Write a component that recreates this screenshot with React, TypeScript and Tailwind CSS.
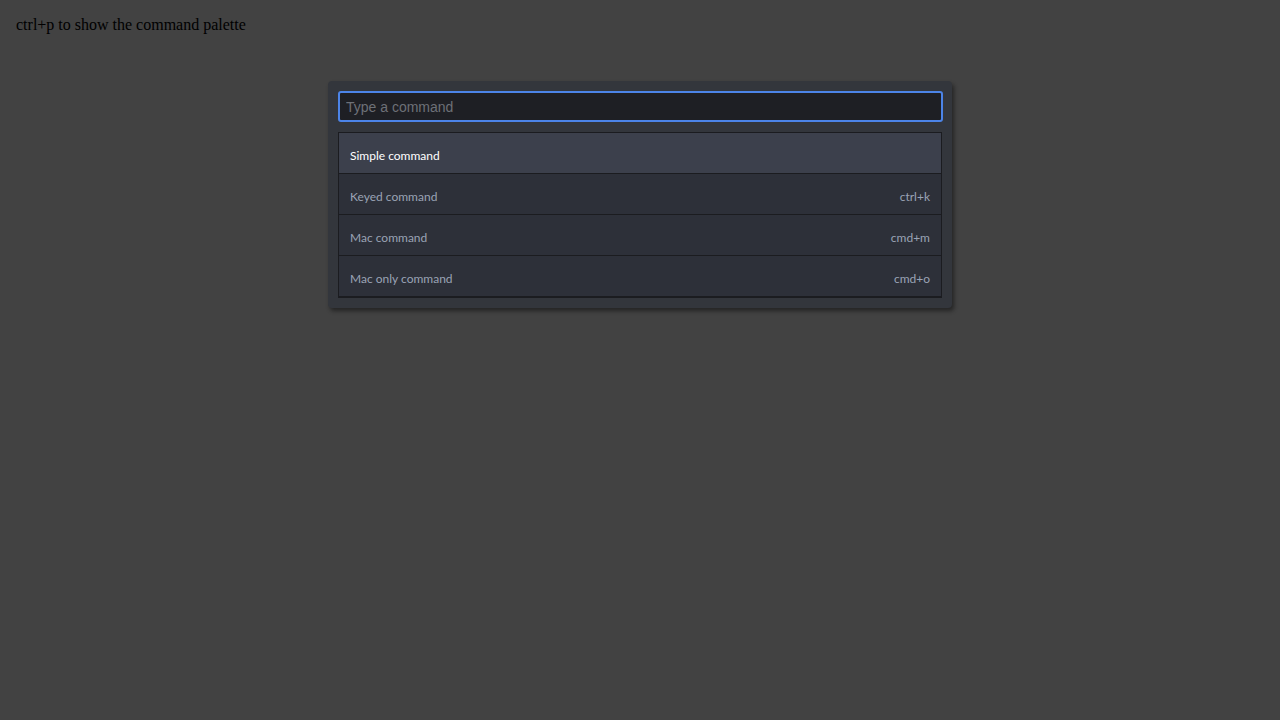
import React from "react";

const items = [
  { name: "Simple command", key: "" },
  { name: "Keyed command", key: "ctrl+k" },
  { name: "Mac command", key: "cmd+m" },
  { name: "Mac only command", key: "cmd+o" },
];

export default function App() {
  return (
    <div className="min-h-screen w-full bg-[#424242] p-4" style={{ fontFamily: '"Liberation Serif", serif' }}>
      <div className="text-[16px] leading-[18px] text-black">ctrl+p to show the command palette</div>
      <div className="flex justify-center mt-[47px]">
        <div className="w-[624px] rounded-[4px] bg-[#33363c] p-[10px] shadow-[2px_3px_4px_rgba(0,0,0,0.45)]">
          <input
            className="block w-[605px] h-[31px] rounded-[3px] border-2 border-[#4c84e8] bg-[#1e1f24] px-[6px] text-[14px] text-[#d0d0d0] placeholder:text-[#6d7077] outline-none"
            style={{ fontFamily: '"Liberation Sans", Arial, sans-serif' }}
            placeholder="Type a command"
          />
          <div className="mt-[10px] border border-[#1b1c20] border-b-2" style={{ fontFamily: 'Lato, sans-serif' }}>
            {items.map((it, i) => (
              <div
                key={it.name}
                className={`flex items-center justify-between px-[11px] pt-[6px] text-[12px] ${i > 0 ? "h-[41px] border-t border-[#1b1c20] bg-[#2d3039] text-[#9aa3b5]" : "h-[40px] bg-[#3c404c] text-white"}`}
              >
                <span>{it.name}</span>
                <span>{it.key}</span>
              </div>
            ))}
          </div>
        </div>
      </div>
    </div>
  );
}
